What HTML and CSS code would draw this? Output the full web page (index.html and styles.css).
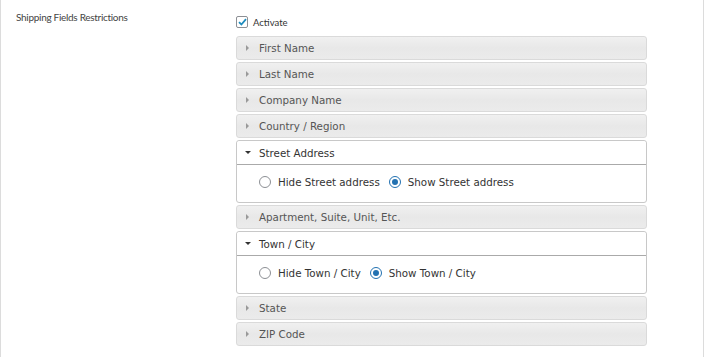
FILE: index.html
```html
<!DOCTYPE html>
<html>
<head>
<meta charset="utf-8">
<link rel="stylesheet" href="styles.css">
</head>
<body>
<div class="wrap">
  <div class="row">
    <div class="label">Shipping Fields Restrictions</div>
    <div class="field">
      <label class="activate"><span class="cb"><svg width="9" height="8" viewBox="0 0 9 8"><path d="M1 4.2 L3.4 6.5 L8 1.2" fill="none" stroke="#1e8cbe" stroke-width="1.8"/></svg></span>Activate</label>
      <div class="acc">
        <div class="hdr"><span class="arr r"></span>First Name</div>
        <div class="hdr"><span class="arr r"></span>Last Name</div>
        <div class="hdr"><span class="arr r"></span>Company Name</div>
        <div class="hdr"><span class="arr r"></span>Country / Region</div>
        <div class="item open">
          <div class="hdr act"><span class="arr d"></span>Street Address</div>
          <div class="panel">
            <label class="opt"><span class="radio"></span>Hide Street address</label>
            <label class="opt"><span class="radio on"></span>Show Street address</label>
          </div>
        </div>
        <div class="hdr"><span class="arr r"></span>Apartment, Suite, Unit, Etc.</div>
        <div class="item open">
          <div class="hdr act"><span class="arr d"></span>Town / City</div>
          <div class="panel">
            <label class="opt"><span class="radio"></span>Hide Town / City</label>
            <label class="opt"><span class="radio on"></span>Show Town / City</label>
          </div>
        </div>
        <div class="hdr"><span class="arr r"></span>State</div>
        <div class="hdr"><span class="arr r"></span>ZIP Code</div>
      </div>
    </div>
  </div>
</div>
</body>
</html>
```
FILE: styles.css
```css
html, body { margin: 0; padding: 0; background: #fff; }
body { width: 704px; height: 357px; overflow: hidden; }
.wrap {
  box-sizing: border-box;
  width: 704px;
  height: 357px;
  border-left: 1px solid #dcdcdc;
  border-right: 1px solid #dcdcdc;
}
.row { display: flex; padding-top: 10px; }
.label {
  width: 220px;
  padding-left: 15px;
  font-family: "Lato", sans-serif;
  font-size: 10px;
  letter-spacing: -0.3px;
  color: #444;
  line-height: 14px;
}
.field { width: 411px; }
.activate {
  display: flex;
  align-items: center;
  font-family: "Lato", sans-serif;
  font-size: 9.5px;
  color: #333;
  height: 12px;
  margin-top: 6px;
}
.cb {
  box-sizing: border-box;
  width: 12px; height: 12px;
  border: 1px solid #8c8f94;
  border-radius: 2px;
  margin-right: 5px;
  display: flex; align-items: center; justify-content: center;
  background: #fff;
}
.acc { margin-top: 8px; }
.hdr {
  box-sizing: border-box;
  height: 24px;
  margin-top: 2px;
  border: 1px solid #dadada;
  border-radius: 3px;
  background: linear-gradient(#f0f0f0, #e8e8e8 50%, #ebebeb);
  font-family: "DejaVu Sans", sans-serif;
  font-size: 10.3px;
  color: #555;
  display: flex;
  align-items: center;
  padding-left: 8px;
}
.acc > .hdr:first-child { margin-top: 0; }
.arr { width: 0; height: 0; }
.arr.r { border-left: 3px solid #999; border-top: 3px solid transparent; border-bottom: 3px solid transparent; margin-left: 1px; margin-right: 10px; }
.arr.d { border-top: 3px solid #333; border-left: 3px solid transparent; border-right: 3px solid transparent; margin-right: 8px; }
.item.open {
  margin-top: 2px;
  border: 1px solid #c8c8c8;
  border-radius: 3px;
}
.hdr.act {
  margin: 0;
  border: none;
  border-bottom: 1px solid #aaa;
  border-radius: 3px 3px 0 0;
  background: #fff;
  color: #333;
  height: 24px;
}
.panel {
  box-sizing: border-box;
  height: 37px;
  padding-bottom: 3px;
  display: flex;
  align-items: center;
  padding-left: 22px;
  font-family: "DejaVu Sans", sans-serif;
  font-size: 10.3px;
  color: #333;
}
.opt { display: flex; align-items: center; margin-right: 9px; }
.radio {
  box-sizing: border-box;
  width: 12px; height: 12px;
  border: 1px solid #8c8f94;
  border-radius: 50%;
  margin-right: 7px;
  background: #fff;
  position: relative;
}
.radio.on { border-color: #2271b1; }
.radio.on::after {
  content: "";
  position: absolute;
  left: 2px; top: 2px;
  width: 6px; height: 6px;
  border-radius: 50%;
  background: #2271b1;
}
```
